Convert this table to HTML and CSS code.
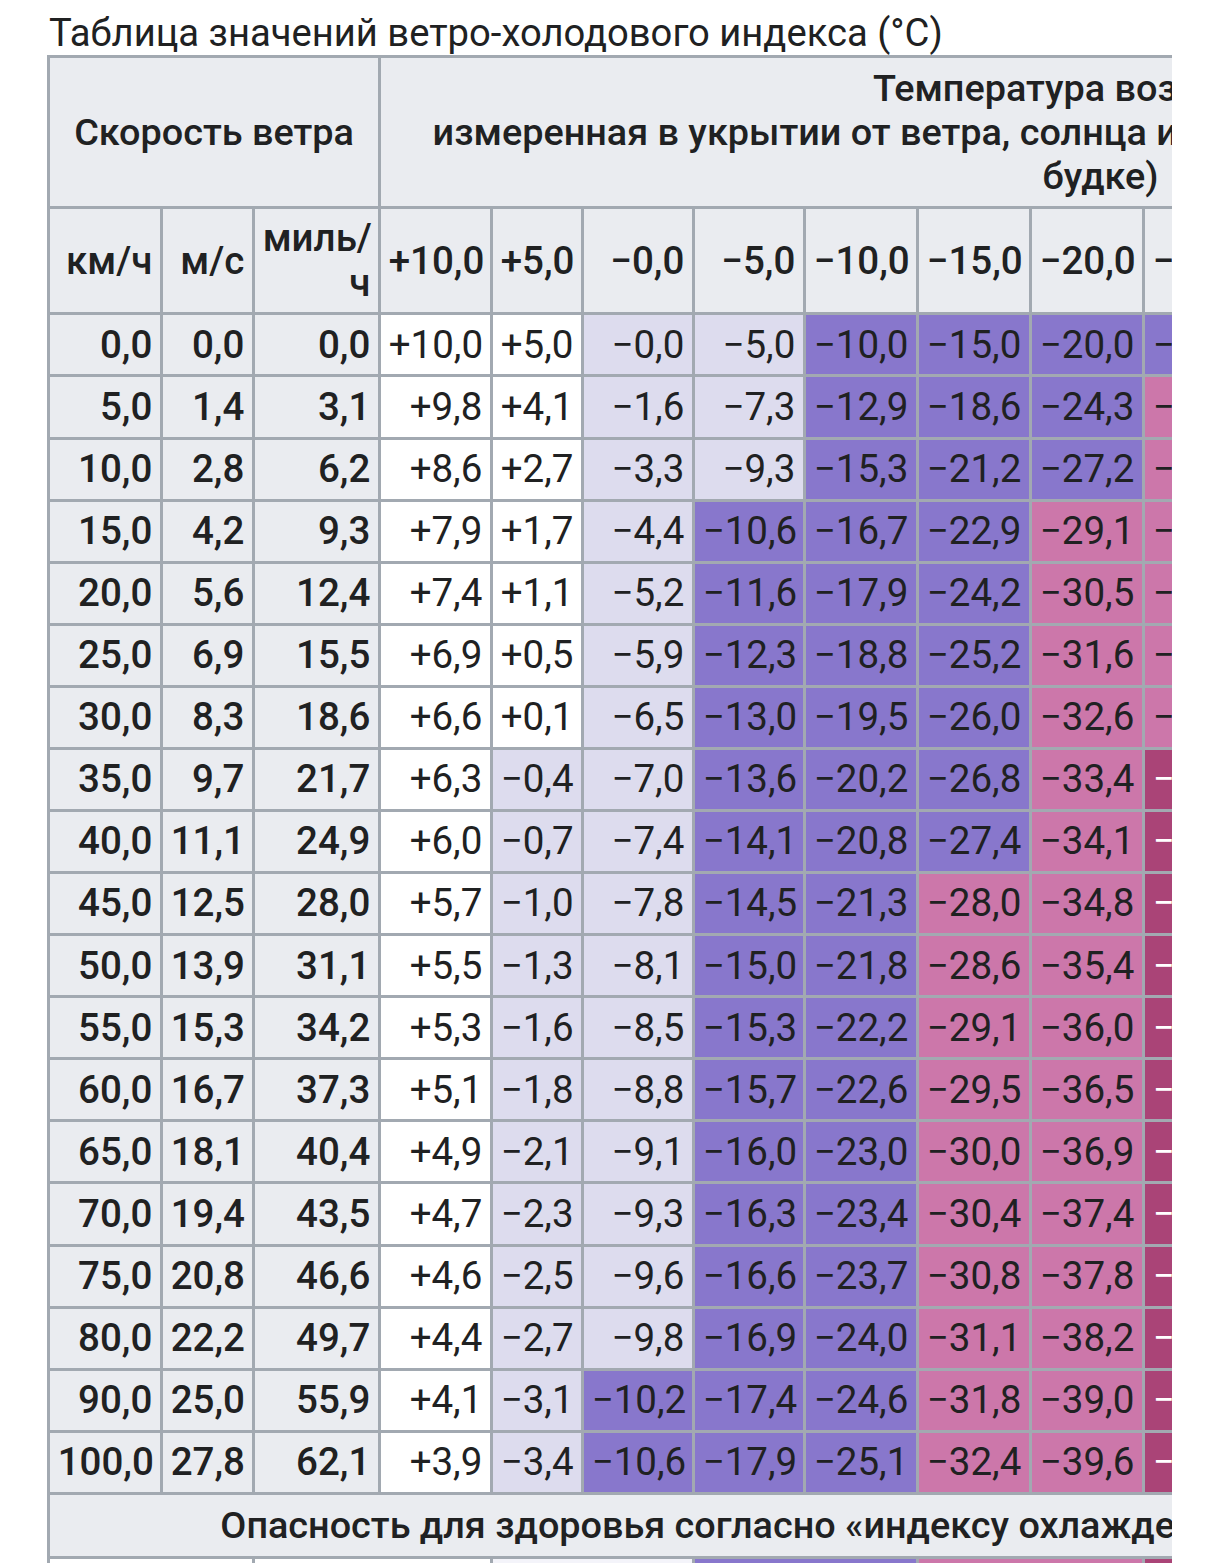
FILE: index.html
```html
<!DOCTYPE html>
<html lang="ru">
<head>
<meta charset="utf-8">
<title>Таблица значений ветро-холодового индекса</title>
<link rel="stylesheet" href="styles.css">
</head>
<body>
<div class="scroller">
<table class="wikitable">
<caption>Таблица значений ветро-холодового индекса (°C)</caption>
<colgroup>
<col class="c-kmh"><col class="c-ms"><col class="c-mph">
<col class="c-t10"><col class="c-t5"><col class="c-t0"><col class="c-tm5">
<col class="c-std"><col class="c-std"><col class="c-std"><col class="c-std">
<col class="c-std"><col class="c-std"><col class="c-std"><col class="c-std"><col class="c-std">
</colgroup>
<thead>
<tr>
<th colspan="3" class="center">Скорость ветра</th>
<th colspan="13" class="center">Температура воздуха (°C,<br>измеренная в укрытии от ветра, солнца и осадков — в метеорологической<br>будке)</th>
</tr>
<tr>
<th>км/ч</th><th>м/с</th><th>миль/<wbr>ч</th>
<th>+10,0</th><th>+5,0</th><th>−0,0</th><th>−5,0</th><th>−10,0</th><th>−15,0</th><th>−20,0</th><th>−25,0</th><th>−30,0</th><th>−35,0</th><th>−40,0</th><th>−45,0</th><th>−50,0</th>
</tr>
</thead>
<tbody>
<tr><th>0,0</th><th>0,0</th><th>0,0</th><td class="w">+10,0</td><td class="w">+5,0</td><td class="l">−0,0</td><td class="l">−5,0</td><td class="p">−10,0</td><td class="p">−15,0</td><td class="p">−20,0</td><td class="p">−25,0</td><td class="k">−30,0</td><td class="k">−35,0</td><td class="d">−40,0</td><td class="d">−45,0</td><td class="d2">−50,0</td></tr>
<tr><th>5,0</th><th>1,4</th><th>3,1</th><td class="w">+9,8</td><td class="w">+4,1</td><td class="l">−1,6</td><td class="l">−7,3</td><td class="p">−12,9</td><td class="p">−18,6</td><td class="p">−24,3</td><td class="k">−30,0</td><td class="k">−35,6</td><td class="d">−41,3</td><td class="d">−47,0</td><td class="d2">−52,6</td><td class="d3">−58,3</td></tr>
<tr><th>10,0</th><th>2,8</th><th>6,2</th><td class="w">+8,6</td><td class="w">+2,7</td><td class="l">−3,3</td><td class="l">−9,3</td><td class="p">−15,3</td><td class="p">−21,2</td><td class="p">−27,2</td><td class="k">−33,2</td><td class="k">−39,2</td><td class="d">−45,1</td><td class="d2">−51,1</td><td class="d3">−57,1</td><td class="d3">−63,0</td></tr>
<tr><th>15,0</th><th>4,2</th><th>9,3</th><td class="w">+7,9</td><td class="w">+1,7</td><td class="l">−4,4</td><td class="p">−10,6</td><td class="p">−16,7</td><td class="p">−22,9</td><td class="k">−29,1</td><td class="k">−35,2</td><td class="d">−41,4</td><td class="d">−47,6</td><td class="d2">−53,7</td><td class="d3">−59,9</td><td class="d3">−66,1</td></tr>
<tr><th>20,0</th><th>5,6</th><th>12,4</th><td class="w">+7,4</td><td class="w">+1,1</td><td class="l">−5,2</td><td class="p">−11,6</td><td class="p">−17,9</td><td class="p">−24,2</td><td class="k">−30,5</td><td class="k">−36,8</td><td class="d">−43,1</td><td class="d2">−49,4</td><td class="d3">−55,7</td><td class="d3">−62,0</td><td class="d3">−68,3</td></tr>
<tr><th>25,0</th><th>6,9</th><th>15,5</th><td class="w">+6,9</td><td class="w">+0,5</td><td class="l">−5,9</td><td class="p">−12,3</td><td class="p">−18,8</td><td class="p">−25,2</td><td class="k">−31,6</td><td class="k">−38,1</td><td class="d">−44,5</td><td class="d2">−50,9</td><td class="d3">−57,3</td><td class="d3">−63,8</td><td class="d3">−70,2</td></tr>
<tr><th>30,0</th><th>8,3</th><th>18,6</th><td class="w">+6,6</td><td class="w">+0,1</td><td class="l">−6,5</td><td class="p">−13,0</td><td class="p">−19,5</td><td class="p">−26,0</td><td class="k">−32,6</td><td class="k">−39,1</td><td class="d">−45,7</td><td class="d2">−52,2</td><td class="d3">−58,7</td><td class="d3">−65,2</td><td class="d3">−71,8</td></tr>
<tr><th>35,0</th><th>9,7</th><th>21,7</th><td class="w">+6,3</td><td class="l">−0,4</td><td class="l">−7,0</td><td class="p">−13,6</td><td class="p">−20,2</td><td class="p">−26,8</td><td class="k">−33,4</td><td class="d">−40,0</td><td class="d">−46,6</td><td class="d2">−53,2</td><td class="d3">−59,8</td><td class="d3">−66,4</td><td class="d3">−73,1</td></tr>
<tr><th>40,0</th><th>11,1</th><th>24,9</th><td class="w">+6,0</td><td class="l">−0,7</td><td class="l">−7,4</td><td class="p">−14,1</td><td class="p">−20,8</td><td class="p">−27,4</td><td class="k">−34,1</td><td class="d">−40,8</td><td class="d">−47,5</td><td class="d2">−54,2</td><td class="d3">−60,9</td><td class="d3">−67,6</td><td class="d3">−74,2</td></tr>
<tr><th>45,0</th><th>12,5</th><th>28,0</th><td class="w">+5,7</td><td class="l">−1,0</td><td class="l">−7,8</td><td class="p">−14,5</td><td class="p">−21,3</td><td class="k">−28,0</td><td class="k">−34,8</td><td class="d">−41,6</td><td class="d2">−48,3</td><td class="d3">−55,1</td><td class="d3">−61,8</td><td class="d3">−68,6</td><td class="d3">−75,3</td></tr>
<tr><th>50,0</th><th>13,9</th><th>31,1</th><td class="w">+5,5</td><td class="l">−1,3</td><td class="l">−8,1</td><td class="p">−15,0</td><td class="p">−21,8</td><td class="k">−28,6</td><td class="k">−35,4</td><td class="d">−42,2</td><td class="d2">−49,0</td><td class="d3">−55,8</td><td class="d3">−62,7</td><td class="d3">−69,5</td><td class="d3">−76,3</td></tr>
<tr><th>55,0</th><th>15,3</th><th>34,2</th><td class="w">+5,3</td><td class="l">−1,6</td><td class="l">−8,5</td><td class="p">−15,3</td><td class="p">−22,2</td><td class="k">−29,1</td><td class="k">−36,0</td><td class="d">−42,8</td><td class="d2">−49,7</td><td class="d3">−56,6</td><td class="d3">−63,4</td><td class="d3">−70,3</td><td class="d3">−77,2</td></tr>
<tr><th>60,0</th><th>16,7</th><th>37,3</th><td class="w">+5,1</td><td class="l">−1,8</td><td class="l">−8,8</td><td class="p">−15,7</td><td class="p">−22,6</td><td class="k">−29,5</td><td class="k">−36,5</td><td class="d">−43,4</td><td class="d2">−50,3</td><td class="d3">−57,2</td><td class="d3">−64,2</td><td class="d3">−71,1</td><td class="d3">−78,0</td></tr>
<tr><th>65,0</th><th>18,1</th><th>40,4</th><td class="w">+4,9</td><td class="l">−2,1</td><td class="l">−9,1</td><td class="p">−16,0</td><td class="p">−23,0</td><td class="k">−30,0</td><td class="k">−36,9</td><td class="d">−43,9</td><td class="d2">−50,9</td><td class="d3">−57,9</td><td class="d3">−64,8</td><td class="d3">−71,8</td><td class="d3">−78,8</td></tr>
<tr><th>70,0</th><th>19,4</th><th>43,5</th><td class="w">+4,7</td><td class="l">−2,3</td><td class="l">−9,3</td><td class="p">−16,3</td><td class="p">−23,4</td><td class="k">−30,4</td><td class="k">−37,4</td><td class="d">−44,4</td><td class="d2">−51,4</td><td class="d3">−58,5</td><td class="d3">−65,5</td><td class="d3">−72,5</td><td class="d3">−79,5</td></tr>
<tr><th>75,0</th><th>20,8</th><th>46,6</th><td class="w">+4,6</td><td class="l">−2,5</td><td class="l">−9,6</td><td class="p">−16,6</td><td class="p">−23,7</td><td class="k">−30,8</td><td class="k">−37,8</td><td class="d">−44,9</td><td class="d2">−51,9</td><td class="d3">−59,0</td><td class="d3">−66,1</td><td class="d3">−73,1</td><td class="d3">−80,2</td></tr>
<tr><th>80,0</th><th>22,2</th><th>49,7</th><td class="w">+4,4</td><td class="l">−2,7</td><td class="l">−9,8</td><td class="p">−16,9</td><td class="p">−24,0</td><td class="k">−31,1</td><td class="k">−38,2</td><td class="d">−45,3</td><td class="d2">−52,4</td><td class="d3">−59,5</td><td class="d3">−66,6</td><td class="d3">−73,7</td><td class="d3">−80,8</td></tr>
<tr><th>90,0</th><th>25,0</th><th>55,9</th><td class="w">+4,1</td><td class="l">−3,1</td><td class="p">−10,2</td><td class="p">−17,4</td><td class="p">−24,6</td><td class="k">−31,8</td><td class="k">−39,0</td><td class="d">−46,1</td><td class="d2">−53,3</td><td class="d3">−60,5</td><td class="d3">−67,7</td><td class="d3">−74,9</td><td class="d3">−82,0</td></tr>
<tr><th>100,0</th><th>27,8</th><th>62,1</th><td class="w">+3,9</td><td class="l">−3,4</td><td class="p">−10,6</td><td class="p">−17,9</td><td class="p">−25,1</td><td class="k">−32,4</td><td class="k">−39,6</td><td class="d">−46,9</td><td class="d2">−54,1</td><td class="d3">−61,4</td><td class="d3">−68,6</td><td class="d3">−75,9</td><td class="d3">−83,1</td></tr>
<tr><th colspan="16" class="center danger">Опасность для здоровья согласно «индексу охлаждения ветром» (для Канады)</th></tr>
<tr class="legend">
<td colspan="2" class="w">Низкая</td><td colspan="2" class="w">Умеренная</td><td colspan="2" class="lt">Высокая</td><td colspan="2" class="p">Очень высокая</td><td colspan="2" class="k">Серьёзная</td><td colspan="2" class="d">Опасная</td><td colspan="2" class="d2">Экстремальная</td><td colspan="2" class="d3">Крайняя</td>
</tr>
</tbody>
</table>
</div>
</body>
</html>
```

FILE: styles.css
```css
html, body {
  margin: 0;
  padding: 0;
  background: #ffffff;
}

body {
  font-family: Roboto, "Noto Sans", "Liberation Sans", sans-serif;
  color: #202122;
  font-size: 38.5px;
  line-height: 44.3px;
}

.scroller {
  margin-left: 47px;
  width: 1125px;
  overflow: hidden;
  background: #f8f9fa;
}

.wikitable {
  border-collapse: collapse;
  table-layout: fixed;
  width: 1773px;
  background: #f8f9fa;
  color: #202122;
}

.wikitable caption {
  text-align: left;
  font-weight: 400;
  font-size: 38.2px;
  padding: 11px 0 0 2px;
  white-space: nowrap;
}

.c-kmh { width: 113px; }
.c-ms { width: 92px; }
.c-mph { width: 126px; }
.c-t10 { width: 112px; }
.c-t5 { width: 91px; }
.c-t0 { width: 111px; }
.c-tm5 { width: 111px; }
.c-std { width: 113px; }

.wikitable th,
.wikitable td {
  border: 3px solid #a2a9b1;
  padding: 7.4px 7.7px;
  text-align: right;
  white-space: nowrap;
  overflow: hidden;
}

.wikitable th {
  background: #eaecf0;
  font-weight: 500;
}

.wikitable thead th {
  white-space: normal;
}

.wikitable th.center {
  text-align: center;
  white-space: nowrap;
  font-size: 37.8px;
}

.wikitable td {
  font-weight: 400;
}

.wikitable .danger {
  padding-top: 8.3px;
  padding-bottom: 8.3px;
}

.w { background: #ffffff; }
.lt { background: #f4f4fa; }
.l { background: #dddcee; }
.p { background: #8877cc; }
.k { background: #cc77aa; }
.d { background: #aa4477; color: #ffffff; }
.d2 { background: #882255; color: #ffffff; }
.d3 { background: #661144; color: #ffffff; }

.legend td {
  text-align: center;
}
```
